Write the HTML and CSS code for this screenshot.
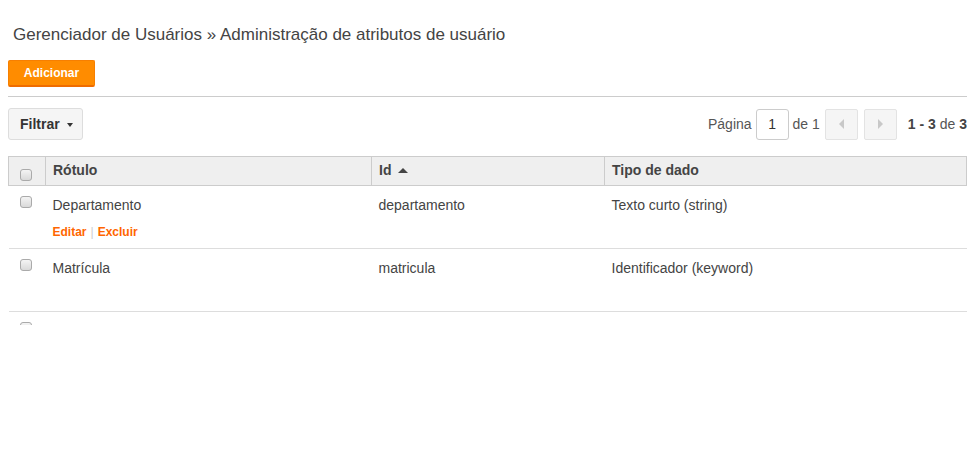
FILE: index.html
```html
<!DOCTYPE html>
<html lang="pt-BR">
<head>
    <meta charset="UTF-8">
    <title>Administração de atributos de usuário</title>
    <link rel="stylesheet" href="styles.css">
</head>
<body>
    <h1 class="page-title">Gerenciador de Usuários » Administração de atributos de usuário</h1>

    <button class="btn-add">Adicionar</button>

    <div class="toolbar">
        <button class="btn-filter">Filtrar <span class="caret"></span></button>
        <div class="pager">
            <span>Página</span>
            <input class="page-input" type="text" value="1">
            <span>de 1</span>
            <button class="pager-btn" disabled><span class="tri-left"></span></button>
            <button class="pager-btn" disabled><span class="tri-right"></span></button>
            <span class="pager-count"><b>1 - 3</b> de <b>3</b></span>
        </div>
    </div>

    <div class="grid-wrap">
        <table class="grid">
            <colgroup>
                <col class="col-check">
                <col class="col-label">
                <col class="col-id">
                <col>
            </colgroup>
            <thead>
                <tr>
                    <th class="cell-check"><span class="check"></span></th>
                    <th>Rótulo</th>
                    <th>Id <span class="sort-up"></span></th>
                    <th>Tipo de dado</th>
                </tr>
            </thead>
            <tbody>
                <tr>
                    <td class="cell-check"><span class="check"></span></td>
                    <td>
                        <div>Departamento</div>
                        <div class="actions"><a href="#">Editar</a><span class="sep">|</span><a href="#">Excluir</a></div>
                    </td>
                    <td>departamento</td>
                    <td>Texto curto (string)</td>
                </tr>
                <tr>
                    <td class="cell-check"><span class="check"></span></td>
                    <td>
                        <div>Matrícula</div>
                        <div class="actions"></div>
                    </td>
                    <td>matricula</td>
                    <td>Identificador (keyword)</td>
                </tr>
                <!-- terceira linha: só aparece o topo, o resto fica abaixo da área visível -->
                <tr>
                    <td class="cell-check"><span class="check"></span></td>
                    <td><div class="actions"></div></td>
                    <td></td>
                    <td></td>
                </tr>
            </tbody>
        </table>
    </div>
</body>
</html>
```

FILE: styles.css
```css
body {
    font-family: "Liberation Sans", Arial, sans-serif;
    font-size: 14px;
    color: #444;
    margin: 8px;
    background: #fff;
}

.page-title {
    font-size: 17px;
    font-weight: normal;
    line-height: 20px;
    color: #444;
    margin: 17px 0 15px 5px;
}

.btn-add {
    display: block;
    width: 87px;
    height: 27px;
    padding: 0;
    background-color: #ff8c00;
    color: #fff;
    font-family: inherit;
    font-size: 12px;
    font-weight: bold;
    border: 1px solid #f77f00;
    border-bottom: 2px solid #ef6c00;
    border-radius: 2px;
    cursor: pointer;
    margin-bottom: 9px;
}

.toolbar {
    display: flex;
    justify-content: space-between;
    align-items: center;
    border-top: 1px solid #ccc;
    padding-top: 11px;
}

.btn-filter {
    width: 75px;
    height: 32px;
    background-color: #f5f5f5;
    border: 1px solid #ddd;
    border-radius: 3px;
    font-family: inherit;
    font-size: 14px;
    font-weight: bold;
    color: #333;
    text-align: left;
    padding: 0 0 0 11px;
}

.caret {
    display: inline-block;
    width: 0;
    height: 0;
    border-left: 3px solid transparent;
    border-right: 3px solid transparent;
    border-top: 4px solid #333;
    vertical-align: middle;
    margin-left: 3px;
}

.pager {
    display: flex;
    align-items: center;
    color: #555;
}

.page-input {
    width: 33px;
    height: 31px;
    box-sizing: border-box;
    margin: 0 4px;
    border: 1px solid #ccc;
    border-radius: 3px;
    text-align: center;
    font-family: inherit;
    font-size: 14px;
    color: #333;
    padding: 0;
}

.pager-btn {
    width: 33px;
    height: 31px;
    margin-left: 5px;
    background: #f5f5f5;
    border: 1px solid #e3e3e3;
    border-radius: 2px;
    padding: 0;
    display: flex;
    align-items: center;
    justify-content: center;
}

.pager-btn + .pager-btn {
    margin-left: 6px;
}

.tri-left {
    width: 0;
    height: 0;
    border-top: 5px solid transparent;
    border-bottom: 5px solid transparent;
    border-right: 5px solid #c8c8c8;
}

.tri-right {
    width: 0;
    height: 0;
    border-top: 5px solid transparent;
    border-bottom: 5px solid transparent;
    border-left: 5px solid #c8c8c8;
}

.pager-count {
    margin-left: 11px;
}

.pager-count b {
    color: #444;
}

.grid-wrap {
    margin-top: 16px;
    height: 169px;
    overflow: hidden;
}

.grid {
    width: 100%;
    border-collapse: collapse;
    table-layout: fixed;
}

.col-check {
    width: 37px;
}

.col-label {
    width: 326px;
}

.col-id {
    width: 233px;
}

.grid th {
    background-color: #efefef;
    border: 1px solid #ccc;
    text-align: left;
    font-weight: bold;
    color: #444;
    padding: 5px 7px 7px;
    vertical-align: top;
    line-height: 16px;
}

.grid td {
    vertical-align: top;
    padding: 11px 6px 8px 7px;
    border-bottom: 1px solid #ddd;
    line-height: 16px;
    color: #444;
}

.grid th.cell-check {
    padding: 12px 0 0 11px;
}

.grid td.cell-check {
    padding: 10px 0 0 11px;
}

.check {
    display: inline-block;
    width: 10px;
    height: 10px;
    border: 1px solid #aaa;
    border-radius: 3px;
    background: linear-gradient(#f4f4f4, #d9d9d9);
    vertical-align: top;
}

.sort-up {
    display: inline-block;
    width: 0;
    height: 0;
    border-left: 5px solid transparent;
    border-right: 5px solid transparent;
    border-bottom: 5px solid #444;
    vertical-align: middle;
    margin-left: 3px;
    margin-top: -2px;
}

.actions {
    margin-top: 12px;
    height: 15px;
    line-height: 15px;
    font-size: 12px;
    font-weight: bold;
}

.actions a {
    color: #f60;
    text-decoration: none;
}

.actions .sep {
    color: #ccc;
    font-weight: normal;
    margin: 0 4px;
}
```
